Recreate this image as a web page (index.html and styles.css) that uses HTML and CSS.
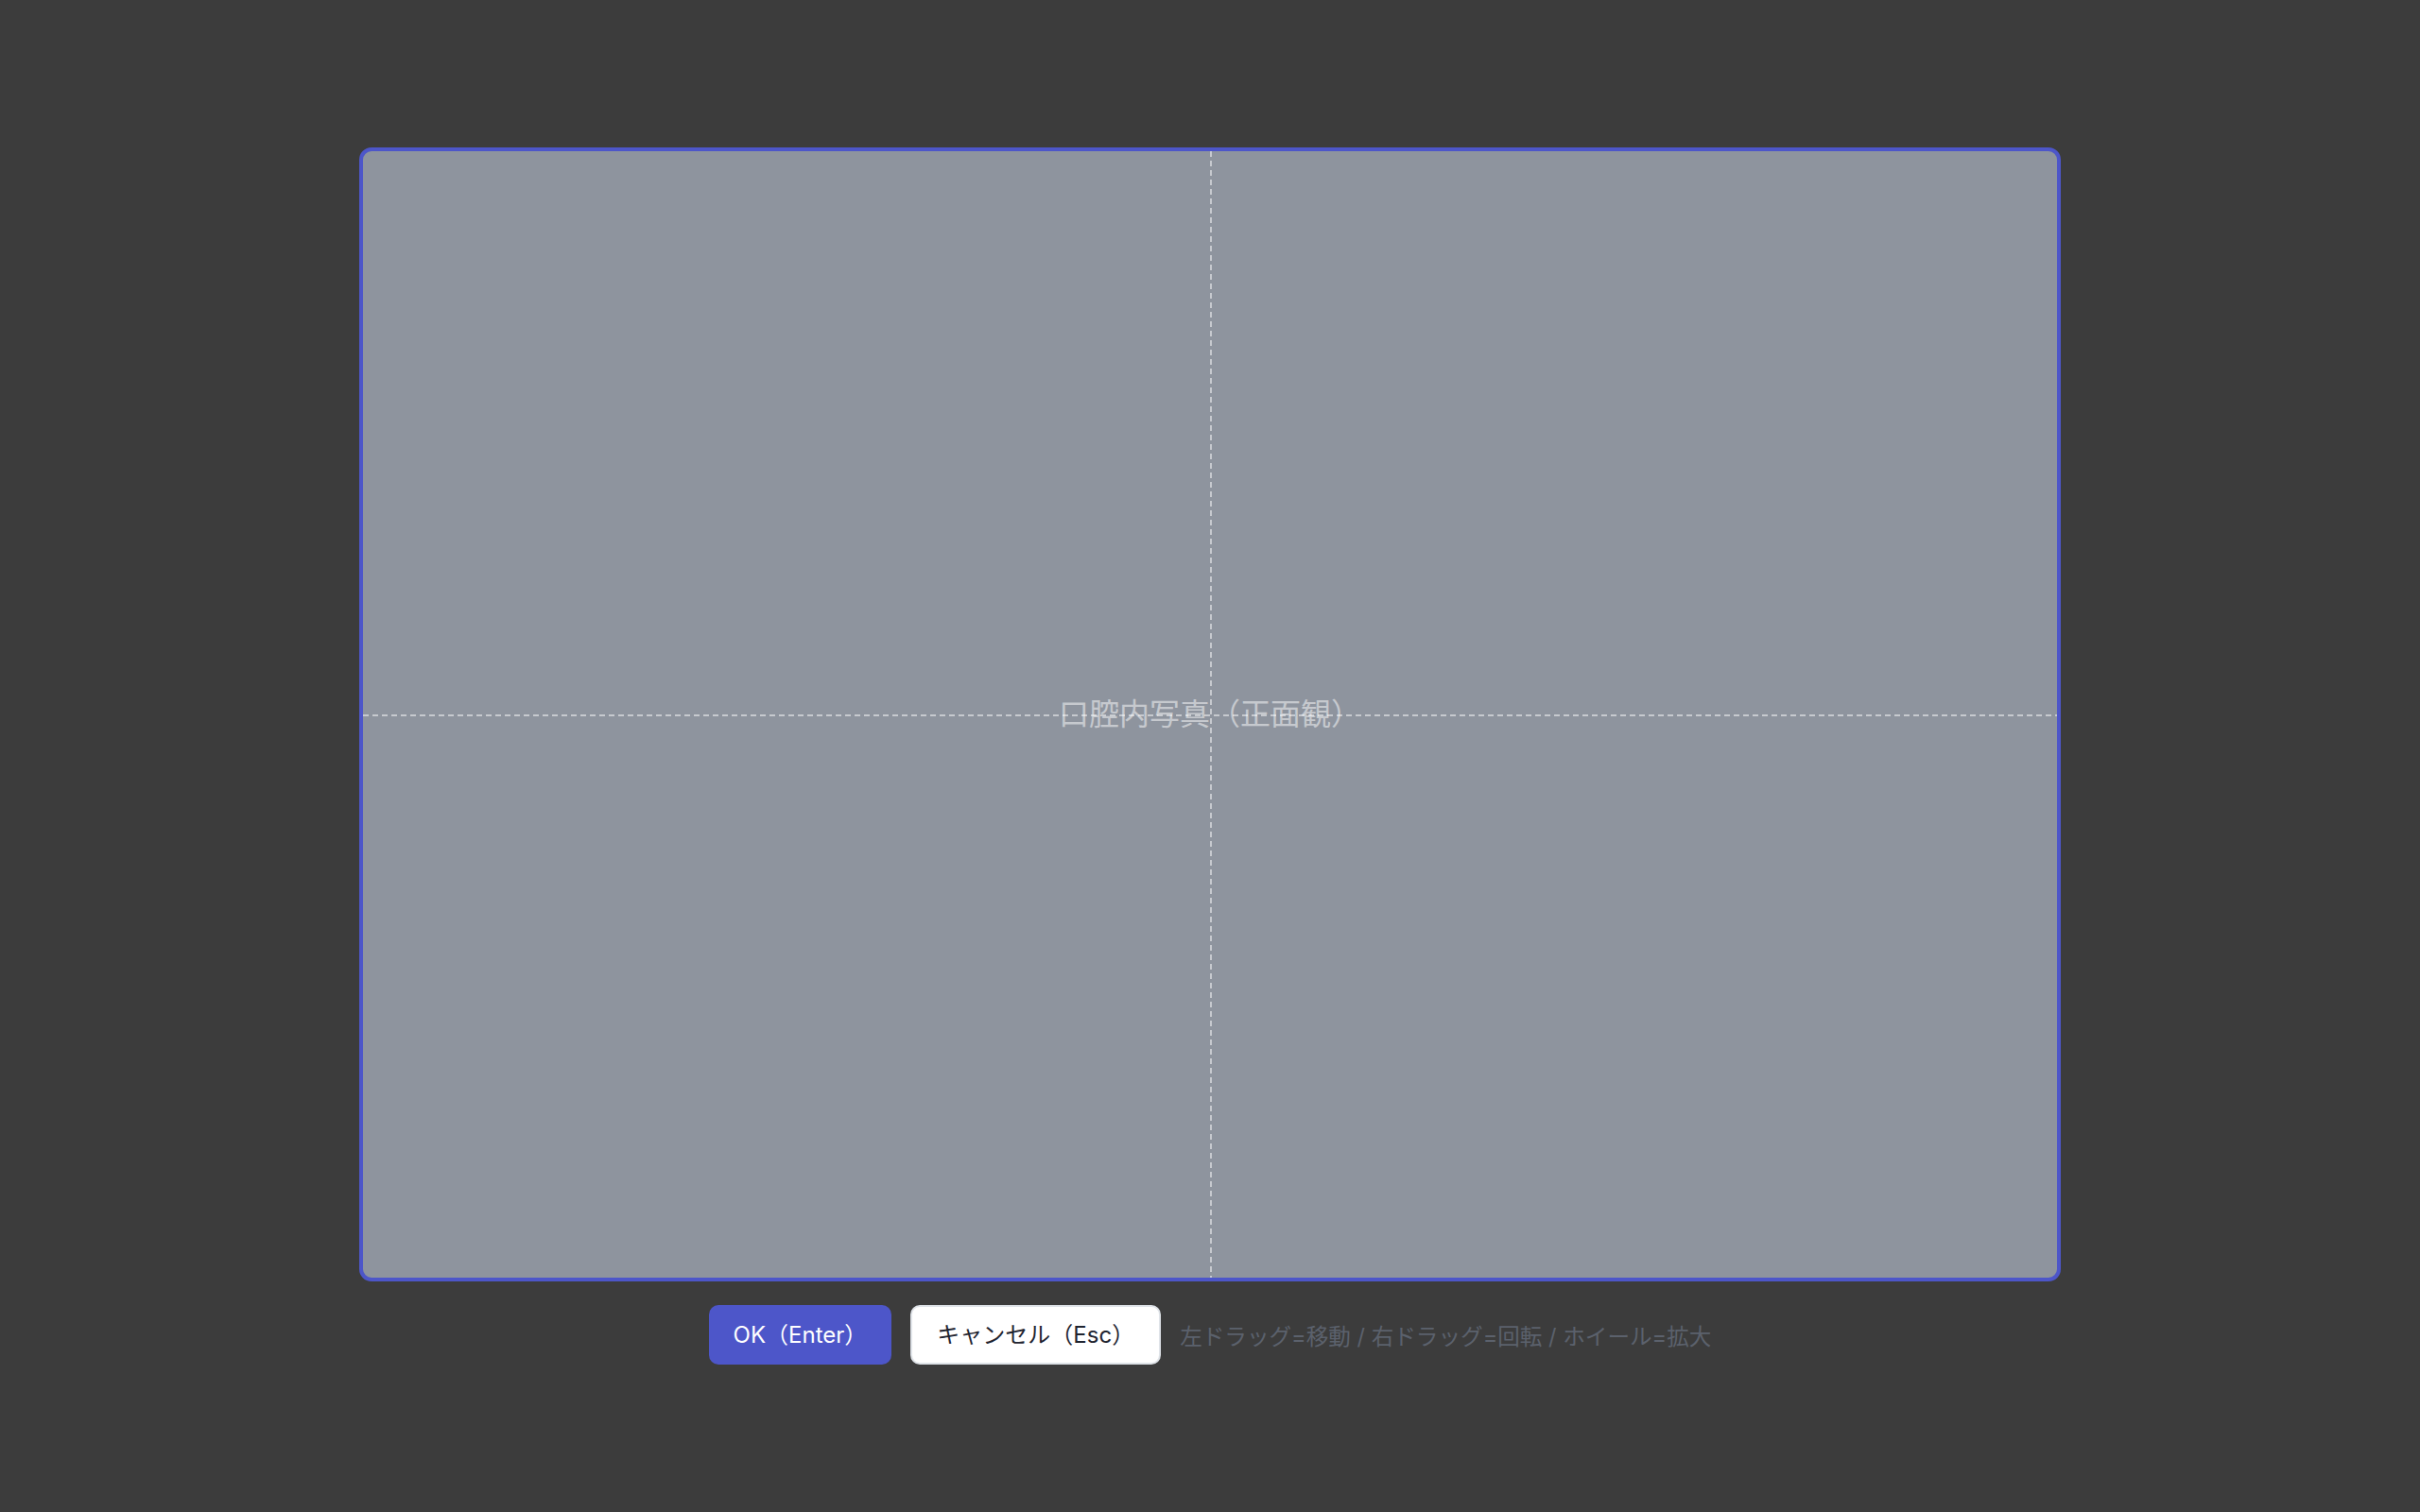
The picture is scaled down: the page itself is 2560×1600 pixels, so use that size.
FILE: index.html
```html
<!DOCTYPE html>
<html lang="ja">
<head>
<meta charset="utf-8">
<title>口腔内写真（正面観）</title>
<link rel="stylesheet" href="styles.css">
</head>
<body>
<main class="editor">
  <div class="stage">
    <span class="stage-label">口腔内写真（正面観）</span>
  </div>
  <div class="actions">
    <button class="btn btn-primary" type="button">OK（Enter）</button>
    <button class="btn btn-secondary" type="button">キャンセル（Esc）</button>
    <span class="hint">左ドラッグ=移動 / 右ドラッグ=回転 / ホイール=拡大</span>
  </div>
</main>
</body>
</html>
```
FILE: styles.css
```css
html, body {
  margin: 0;
  padding: 0;
  height: 100%;
}

body {
  background: #3c3c3c;
  font-family: "Inter", "Noto Sans CJK JP", "Noto Sans", sans-serif;
}

.editor {
  height: 100vh;
  display: flex;
  flex-direction: column;
  align-items: center;
  justify-content: center;
  gap: 25px;
}

.stage {
  box-sizing: border-box;
  width: 1800px;
  height: 1200px;
  border: 4px solid #4d56c9;
  border-radius: 13px;
  background: #8e949e;
  position: relative;
  display: flex;
  align-items: center;
  justify-content: center;
}

.stage::before,
.stage::after {
  content: "";
  position: absolute;
  pointer-events: none;
}

.stage::before {
  left: 50%;
  top: 0;
  bottom: 0;
  width: 2px;
  background: repeating-linear-gradient(to bottom, rgba(255, 255, 255, 0.5) 0 6px, transparent 6px 10px);
}

.stage::after {
  top: 50%;
  left: 0;
  right: 0;
  height: 2px;
  background: repeating-linear-gradient(to right, rgba(255, 255, 255, 0.5) 0 6px, transparent 6px 10px);
}

.stage-label {
  font-size: 32px;
  line-height: 1;
  color: rgba(255, 255, 255, 0.5);
}

.actions {
  display: flex;
  align-items: center;
  gap: 20px;
}

.btn {
  box-sizing: border-box;
  height: 63px;
  padding: 0 26px;
  border-radius: 10px;
  font-family: inherit;
  font-size: 24px;
  line-height: 1;
  cursor: pointer;
}

.btn-primary {
  background: #4d56c9;
  color: #ffffff;
  border: none;
}

.btn-secondary {
  background: #ffffff;
  color: #1f2430;
  border: 2px solid #dfe3e8;
}

.hint {
  font-size: 23.6px;
  color: #5b616c;
}
```
